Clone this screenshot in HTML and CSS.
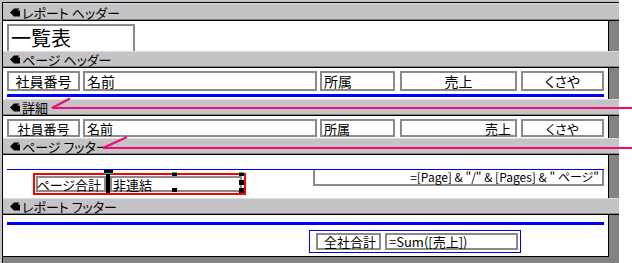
FILE: index.html
```html
<!DOCTYPE html>
<html lang="ja">
<head>
  <meta charset="utf-8">
  <title>レポート デザイン</title>
  <link rel="stylesheet" href="styles.css">
</head>
<body>
  <div class="designer">
    <div class="report">

      <div class="band first">
        <svg class="band-icon" viewBox="0 0 10 9"><path d="M0 4.5 L4 0.5 H9.5 L7.5 2.5 H10 V8.5 H4 Z"/></svg>
        <span>レポート ヘッダー</span>
      </div>
      <div class="section report-header">
        <div class="ctl title">一覧表</div>
      </div>

      <div class="band">
        <svg class="band-icon" viewBox="0 0 10 9"><path d="M0 4.5 L4 0.5 H9.5 L7.5 2.5 H10 V8.5 H4 Z"/></svg>
        <span>ページ ヘッダー</span>
      </div>
      <div class="section page-header">
        <div class="row">
          <div class="ctl c-id center">社員番号</div>
          <div class="ctl c-name">名前</div>
          <div class="ctl c-dept">所属</div>
          <div class="ctl c-sales center">売上</div>
          <div class="ctl c-kusaya center">くさや</div>
        </div>
        <div class="rule thick"></div>
      </div>

      <div class="band">
        <svg class="band-icon" viewBox="0 0 10 9"><path d="M0 4.5 L4 0.5 H9.5 L7.5 2.5 H10 V8.5 H4 Z"/></svg>
        <span>詳細</span>
      </div>
      <div class="section detail">
        <div class="row">
          <div class="ctl c-id center">社員番号</div>
          <div class="ctl c-name">名前</div>
          <div class="ctl c-dept">所属</div>
          <div class="ctl c-sales right">売上</div>
          <div class="ctl c-kusaya center">くさや</div>
        </div>
      </div>

      <div class="band">
        <svg class="band-icon" viewBox="0 0 10 9"><path d="M0 4.5 L4 0.5 H9.5 L7.5 2.5 H10 V8.5 H4 Z"/></svg>
        <span>ページ フッター</span>
      </div>
      <div class="section page-footer">
        <div class="rule thin"></div>
        <div class="footer-row">
          <div class="selection">
            <div class="ctl c-caption right">ページ合計</div>
            <div class="ctl c-value">非連結</div>
            <div class="handle move"></div>
            <div class="handle left-bar"></div>
            <div class="handle top-mid"></div>
            <div class="handle top-right"></div>
            <div class="handle mid-right"></div>
            <div class="handle bottom-mid"></div>
            <div class="handle bottom-right"></div>
          </div>
          <div class="ctl c-pages right">=[Page] &amp; "/" &amp; [Pages] &amp; " ページ"</div>
        </div>
      </div>

      <div class="band">
        <svg class="band-icon" viewBox="0 0 10 9"><path d="M0 4.5 L4 0.5 H9.5 L7.5 2.5 H10 V8.5 H4 Z"/></svg>
        <span>レポート フッター</span>
      </div>
      <div class="section report-footer">
        <div class="rule thick"></div>
        <div class="group">
          <div class="ctl c-total right">全社合計</div>
          <div class="ctl c-sum">=Sum([売上])</div>
        </div>
      </div>

    </div>
  </div>

  <!-- leader lines drawn over the bands -->
  <svg class="leaders" width="632" height="263">
    <polyline points="70,98.5 52,108 632,108"/>
    <polyline points="127,137 103,148 632,148"/>
  </svg>
</body>
</html>
```

FILE: styles.css
```css
* { margin: 0; padding: 0; box-sizing: border-box; }
body {
  background: #fff;
  font-family: "Noto Sans CJK JP", "Noto Sans", sans-serif;
  font-feature-settings: "palt";
  color: #000;
  width: 632px;
  height: 263px;
  overflow: hidden;
  position: relative;
}
.designer {
  width: 619px;
  border-top: 2px solid #c6c3c6;
  border-left: 2px solid #c6c3c6;
}
.report {
  background: #848284;
  border-top: 1px solid #000;
  border-left: 1px solid #000;
  padding-bottom: 7px;
}

/* band selectors */
.band {
  height: 17px;
  display: flex;
  align-items: center;
  padding-left: 7px;
  background: #c6c3c6;
  border-top: 1px solid #dedbde;
  border-bottom: 1px solid #000;
  box-shadow: inset 0 -1px #848284;
  font-size: 13px;
  line-height: 1;
  white-space: pre;
}
.band.first { height: 18px; }
.band-icon {
  width: 10px;
  height: 9px;
  margin-right: 2px;
  fill: #000;
  flex-shrink: 0;
}

/* sections */
.section {
  width: 606px;
  background: #fff;
  border-right: 1px solid #000;
  overflow: hidden;
  padding-left: 4px;
}
.report-header { height: 30px; padding-top: 3px; }
.page-header { height: 31px; padding-top: 3px; }
.detail { height: 22px; padding-top: 3px; }
.page-footer { height: 43px; padding-top: 14px; }
.report-footer { height: 42px; padding-top: 7px; border-bottom: 1px solid #000; }

/* controls */
.ctl {
  border: 2px solid #8a8a8a;
  background: #fff;
  display: flex;
  align-items: center;
  padding: 0 2px;
  font-size: 13px;
  line-height: 1;
  white-space: pre;
  flex-shrink: 0;
}
.ctl.center { justify-content: center; }
.ctl.right { justify-content: flex-end; padding-right: 3px; }

.title {
  width: 128px;
  height: 32px;
  font-size: 20px;
  align-items: flex-start;
  padding-top: 2px;
}

.row { display: flex; }
.page-header .ctl { height: 20px; font-size: 14px; }
.detail .ctl { height: 18px; }
.c-id { width: 73px; }
.c-name { width: 234px; margin-left: 3px; }
.c-dept { width: 75px; margin-left: 3px; }
.c-sales { width: 117px; margin-left: 5px; }
.c-kusaya { width: 83px; margin-left: 4px; }
.detail .c-sales { padding-right: 4px; }

.rule { width: 597px; background: #0000ff; }
.rule.thick { height: 3px; margin-top: 3px; }
.rule.thin { height: 1px; }
.report-footer .rule.thick { margin-top: 0; }

/* page footer */
.footer-row { display: flex; align-items: flex-start; }
.selection {
  position: relative;
  width: 213px;
  height: 22px;
  margin: 3px 0 0 26px;
  border: 2px solid #ff0000;
  display: flex;
  padding: 1px 0 0 1px;
}
.c-caption { width: 70px; height: 16px; }
.c-value { width: 132px; height: 16px; margin-left: 4px; padding-left: 1px; }
.c-pages {
  width: 291px;
  height: 16px;
  margin-left: 67px;
  border-top: none;
  font-size: 12px;
}

.handle { position: absolute; background: #000; }
.handle.move { left: 69px; top: -5px; width: 9px; height: 3px; border-bottom: 1px solid #00c0c0; box-sizing: content-box; }
.handle.left-bar { left: 71px; top: -1px; width: 4px; height: 19px; }
.handle.top-mid,
.handle.top-right { top: -3px; width: 5px; height: 4px; border-top: 1px solid #00c0c0; }
.handle.top-mid { left: 137px; }
.handle.top-right { left: 204px; }
.handle.mid-right { left: 204px; top: 5px; width: 5px; height: 5px; }
.handle.bottom-mid { left: 137px; top: 13px; width: 5px; height: 4px; }
.handle.bottom-right { left: 204px; top: 13px; width: 5px; height: 5px; }

/* report footer */
.group {
  display: flex;
  width: 212px;
  height: 23px;
  margin: 5px 0 0 302px;
  border: 1px solid #0000ff;
  padding: 2px 0 0 6px;
}
.c-total { width: 65px; height: 17px; }
.c-sum { width: 133px; height: 17px; margin-left: 4px; }

.leaders {
  position: absolute;
  top: 0;
  left: 0;
  pointer-events: none;
  fill: none;
  stroke: #ef0a7a;
  stroke-width: 2;
}
```
